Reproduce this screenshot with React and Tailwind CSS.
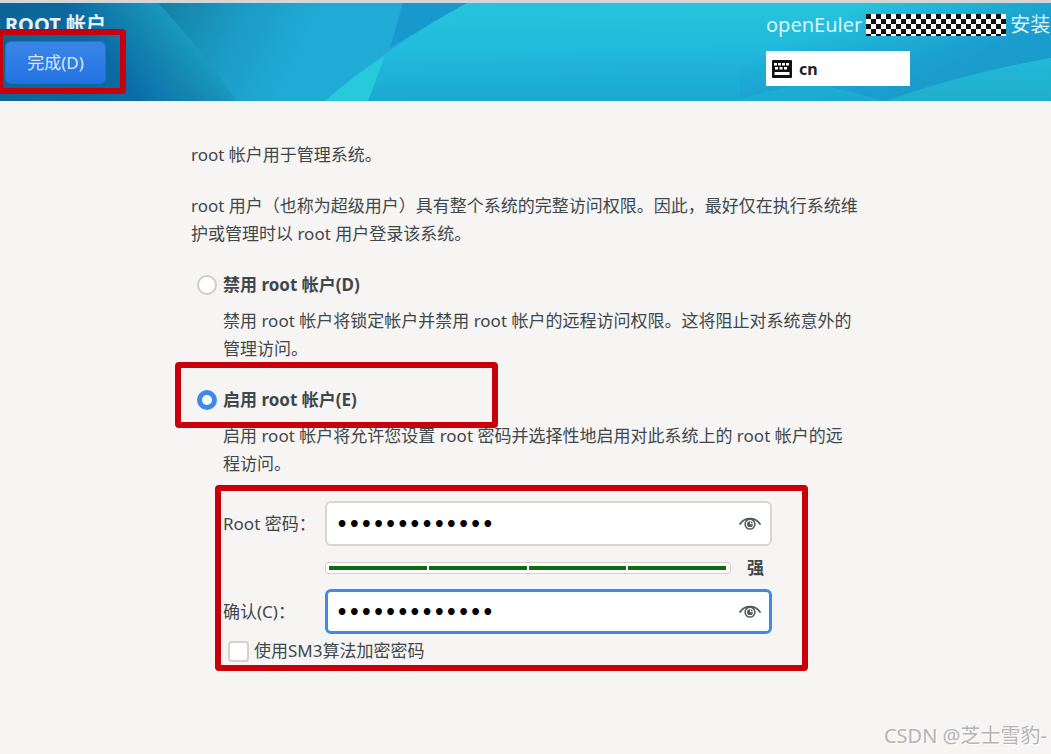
import { useState } from 'react'

const HeaderBackground = () => (
  <svg className="absolute inset-0 w-full h-full" viewBox="0 0 1051 98" preserveAspectRatio="none" aria-hidden="true">
    <defs>
      <linearGradient id="base" x1="0" x2="1" y1="0" y2="0">
        <stop offset="0" stopColor="#0b6496" />
        <stop offset="0.12" stopColor="#0b6ba5" />
        <stop offset="0.17" stopColor="#0b72ae" />
      </linearGradient>
      <linearGradient id="band" gradientUnits="userSpaceOnUse" x1="138" y1="95" x2="197" y2="49">
        <stop offset="0" stopColor="#1388b4" stopOpacity="0" />
        <stop offset="0.55" stopColor="#1588b0" stopOpacity="0.85" />
        <stop offset="1" stopColor="#1a98c0" />
      </linearGradient>
      <linearGradient id="teal" gradientUnits="userSpaceOnUse" x1="170" y1="0" x2="300" y2="60">
        <stop offset="0" stopColor="#1583a9" />
        <stop offset="0.5" stopColor="#1b9cc6" />
        <stop offset="1" stopColor="#20abd6" />
      </linearGradient>
      <linearGradient id="sweep" x1="0" x2="0.12" y1="0" y2="1">
        <stop offset="0" stopColor="#27c4dd" />
        <stop offset="0.45" stopColor="#22bcdc" />
        <stop offset="1" stopColor="#1ca8d2" />
      </linearGradient>
      <linearGradient id="shade" gradientUnits="userSpaceOnUse" x1="850" y1="10" x2="895" y2="110">
        <stop offset="0" stopColor="#1a9ccd" stopOpacity="0" />
        <stop offset="0.85" stopColor="#1a9ccd" />
      </linearGradient>
      <linearGradient id="corner" x1="0" x2="0" y1="0" y2="1">
        <stop offset="0" stopColor="#22b9da" />
        <stop offset="1" stopColor="#20aecb" />
      </linearGradient>
    </defs>
    <rect width="1051" height="98" fill="url(#base)" />
    <path d="M0 0H160Q205 50 238 98H0Z" fill="url(#band)" />
    <path d="M158 0H500V98H236Q205 50 158 0Z" fill="url(#teal)" />
    <path d="M403 0H467Q430 20 390 45Z" fill="#1899cd" />
    <path d="M467 0H1051V98H325Q385 45 467 0Z" fill="url(#sweep)" />
    <path d="M325 98Q350 75 385 53L368 98Z" fill="#27c9da" />
    <path d="M740 0H1051V98H740Z" fill="url(#shade)" />
    <path d="M885 98Q965 70 1051 55V98Z" fill="url(#corner)" />
    <path d="M735 98Q770 86 815 80Q850 88 885 98Z" fill="#22b4d8" opacity="0.5" />
  </svg>
)

const KeyboardIcon = () => (
  <svg width="20" height="18" viewBox="0 0 20 18" aria-hidden="true">
    <rect width="20" height="18" rx="1" fill="#111" />
    <g fill="#fff">
      <rect x="2" y="3" width="3" height="2.5" />
      <rect x="6" y="3" width="3" height="2.5" />
      <rect x="10" y="3" width="3" height="2.5" />
      <rect x="14" y="3" width="3" height="2.5" />
      <rect x="3" y="7" width="3" height="2.5" />
      <rect x="7.5" y="7" width="3" height="2.5" />
      <rect x="12" y="7" width="3" height="2.5" />
      <rect x="2.5" y="12" width="15" height="3" />
    </g>
  </svg>
)

const EyeIcon = () => (
  <svg width="22" height="14" viewBox="0 0 22 14" fill="none" stroke="#50575a" aria-hidden="true">
    <path d="M1 7C3.5 3.2 7 1.6 11 1.6s7.500 1.600 10 5.400" strokeWidth="1.7" strokeLinecap="round" />
    <circle cx="11" cy="7.200" r="4.900" strokeWidth="1.500" />
    <circle cx="11" cy="7.200" r="2.900" fill="#50575a" stroke="none" />
    <path d="M11.500 4.500V6.800h2.400" stroke="#fff" strokeWidth="1" />
  </svg>
)

// red frame drawn over the part the reader should look at
const Highlight = ({ className }) => (
  <div className={`absolute border-6 border-[#c7000b] rounded-[4px] pointer-events-none ${className}`} />
)

const PasswordField = ({ id, value, onChange, active }) => {
  const [visible, setVisible] = useState(false)
  return (
    <div className={`flex items-center h-[45px] rounded-md bg-white ${active ? 'border-3 border-[#3f8ae8] px-2' : 'border-2 border-[#d9d5d1] px-[9px]'}`}>
      <input
        id={id}
        type={visible ? 'text' : 'password'}
        value={value}
        onChange={(e) => onChange(e.target.value)}
        className="flex-1 min-w-0 h-full text-[19px] font-bold text-black outline-none font-['DejaVu_Sans',sans-serif]"
      />
      <button type="button" aria-label="显示密码" onClick={() => setVisible(!visible)}>
        <EyeIcon />
      </button>
    </div>
  )
}

const RootOption = ({ value, label, selected, onSelect, children }) => (
  <div>
    <label className="flex items-center gap-1.5 pl-1.5 font-bold">
      <input
        type="radio"
        name="root-account"
        value={value}
        checked={selected}
        onChange={() => onSelect(value)}
        className="appearance-none size-5 rounded-full bg-white border-2 border-[#d2ccc8] checked:border-[5px] checked:border-[#3f8ae8]"
      />
      {label}
    </label>
    <p className="mt-2 pl-8 pr-4">{children}</p>
  </div>
)

const App = () => {
  const [option, setOption] = useState('enable')
  const [password, setPassword] = useState('openEuler2024')
  const [confirm, setConfirm] = useState('openEuler2024')
  const [sm3, setSm3] = useState(false)

  return (
    <div className="relative min-h-screen overflow-hidden bg-[#f6f5f4] text-[#3f474a] text-[17px] leading-7 font-['Noto_Sans','Noto_Sans_CJK_SC',sans-serif]" lang="zh-CN">
      {/* Header */}
      <header className="relative border-t-3 border-[#d6d6d6]">
        <HeaderBackground />
        <div className="relative flex justify-between items-start h-[98px] pl-[5px] pt-2">
          <div>
            <h1 className="text-xl leading-7 font-bold text-[#e6f1f8]">ROOT 帐户</h1>
            <div className="relative mt-0.5">
              <button type="button" className="block w-[101px] h-[43px] rounded-md border border-[#2a6fd0] bg-linear-to-b from-[#3a85e8] to-[#2273e2] text-[#dbe7f8]">完成(D)</button>
              <Highlight className="-left-2 -right-5 -top-3 -bottom-2.5" />
            </div>
          </div>
          <div className="w-[285px]">
            <div className="flex items-center gap-1 w-max text-xl leading-7 text-[#d9f4fb]">
              <span>openEuler</span>
              <span className="w-[140px] h-[22px] bg-[repeating-conic-gradient(#fff_0_25%,#111_0_50%)] bg-size-[10px_10px]" />
              <span>安装</span>
            </div>
            <button type="button" className="flex items-center gap-[7px] w-[144px] h-[35px] mt-3 pl-1.5 bg-white text-base font-bold text-[#222]">
              <KeyboardIcon />
              cn
            </button>
          </div>
        </div>
      </header>

      {/* Main content */}
      <main className="ml-[191px] max-w-[680px] pt-10 flex flex-col gap-[23px]">
        <p>root 帐户用于管理系统。</p>
        <p>root 用户（也称为超级用户）具有整个系统的完整访问权限。因此，最好仅在执行系统维护或管理时以 root 用户登录该系统。</p>
        <RootOption value="disable" label="禁用 root 帐户(D)" selected={option === 'disable'} onSelect={setOption}>
          禁用 root 帐户将锁定帐户并禁用 root 帐户的远程访问权限。这将阻止对系统意外的管理访问。
        </RootOption>
        <div className="relative">
          <RootOption value="enable" label="启用 root 帐户(E)" selected={option === 'enable'} onSelect={setOption}>
            启用 root 帐户将允许您设置 root 密码并选择性地启用对此系统上的 root 帐户的远程访问。
          </RootOption>
          <Highlight className="-left-4 -top-6 w-[323px] h-[66px]" />
        </div>

        <form className="relative ml-8 max-w-[549px]">
          <div className="grid grid-cols-[102px_1fr] items-center">
            <label htmlFor="password">Root 密码：</label>
            <PasswordField id="password" value={password} onChange={setPassword} />

            <div className="col-start-2 flex items-center gap-4 h-[43px]">
              <div className="flex flex-1 gap-0.5 h-3 p-[3px] pr-1 rounded-sm border border-[#d5d0cc] bg-white" role="meter" aria-label="密码强度" aria-valuemin={0} aria-valuemax={4} aria-valuenow={4}>
                {[1, 2, 3, 4].map((n) => (
                  <span key={n} className="flex-1 bg-[#0f6b0f]" />
                ))}
              </div>
              <span className="w-[25px] font-bold">强</span>
            </div>

            <label htmlFor="confirm">确认(C)：</label>
            <PasswordField id="confirm" value={confirm} onChange={setConfirm} active />
          </div>
          <label className="flex items-center gap-[5px] mt-[3px] pl-[5px]">
            <input
              type="checkbox"
              checked={sm3}
              onChange={(e) => setSm3(e.target.checked)}
              className="appearance-none size-[21px] rounded-sm bg-white border-2 border-[#d5d0cc] checked:bg-[#3f8ae8]"
            />
            使用SM3算法加密密码
          </label>
          <Highlight className="-left-2 -right-9 -top-4 -bottom-1.5" />
        </form>
      </main>

      <div className="absolute right-1 bottom-1 text-xl leading-7 text-[#b4b4b4] [text-shadow:1px_1px_0_#fff]">CSDN @芝士雪豹-</div>
    </div>
  )
}

export default App
